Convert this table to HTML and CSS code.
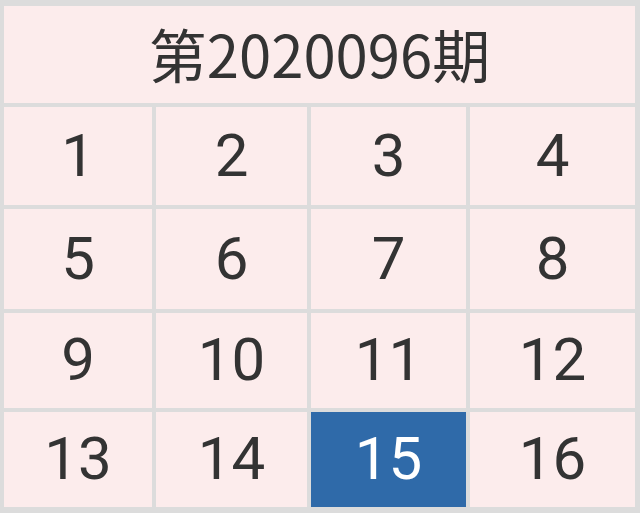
FILE: index.html
```html
<!DOCTYPE html>
<html lang="zh">
<head>
<meta charset="utf-8">
<link rel="stylesheet" href="styles.css">
</head>
<body>
<div class="board">
  <div class="title">第2020096期</div>
  <div class="cell">1</div>
  <div class="cell">2</div>
  <div class="cell">3</div>
  <div class="cell">4</div>
  <div class="cell">5</div>
  <div class="cell">6</div>
  <div class="cell">7</div>
  <div class="cell">8</div>
  <div class="cell">9</div>
  <div class="cell">10</div>
  <div class="cell">11</div>
  <div class="cell">12</div>
  <div class="cell">13</div>
  <div class="cell">14</div>
  <div class="cell active">15</div>
  <div class="cell">16</div>
</div>
</body>
</html>
```
FILE: styles.css
```css
html, body {
  margin: 0;
  padding: 0;
  background: #dcdcdc;
}
.board {
  width: 640px;
  height: 513px;
  box-sizing: border-box;
  padding: 6px 5px 6px 4px;
  display: grid;
  grid-template-columns: 148px 151px 155px 165px;
  grid-template-rows: 97px 98px 100px 95px 95px;
  column-gap: 4px;
  row-gap: 4px;
  background: #dcdcdc;
}
.title {
  grid-column: 1 / -1;
  background: #fcecec;
  display: flex;
  align-items: center;
  justify-content: center;
  font-family: "Noto Sans CJK SC", sans-serif;
  font-size: 58px;
  color: #333333;
  padding-bottom: 4px;
}
.cell {
  background: #fcecec;
  display: flex;
  align-items: center;
  justify-content: center;
  font-family: Roboto, "Noto Sans", sans-serif;
  font-size: 60px;
  color: #333333;
  padding-bottom: 2px;
}
.cell.active {
  background: #2f6aa9;
  color: #ffffff;
}
```
